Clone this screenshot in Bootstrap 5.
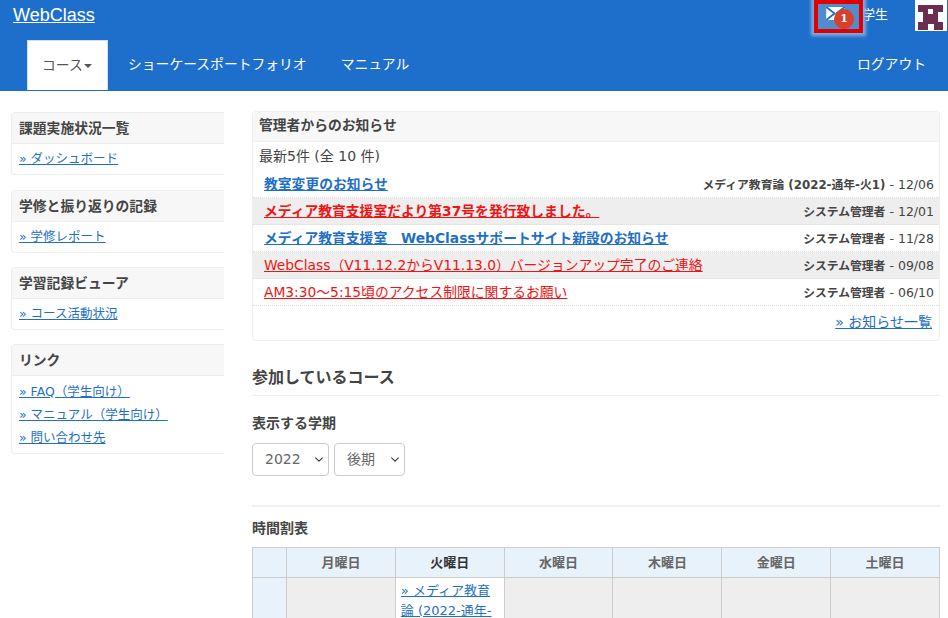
<!DOCTYPE html>
<html lang="ja">
<head>
<meta charset="utf-8">
<title>WebClass</title>
<link href="https://cdn.jsdelivr.net/npm/bootstrap@5.3.0/dist/css/bootstrap.min.css" rel="stylesheet">
<style>
html,body{height:618px;overflow:hidden}
body{font-family:"DejaVu Sans","Noto Sans CJK JP",sans-serif;font-size:14px;color:#444;background:#fff}
a{color:#1f6fc6}
.wc-top{background:#1e6fcb;height:91px;color:#fff}
.wc-row1{height:33px;padding-left:13px}
.wc-brand{color:#fff;font-size:18px;line-height:30px;font-family:"Liberation Sans",sans-serif}
.wc-mail{width:49px;height:33px;border:4px solid #e00000;box-shadow:0 0 3px 3px #7fabe0;background:#4f8cd2;position:relative}
.wc-badge{position:absolute;left:16px;top:5px;width:20px;height:20px;border-radius:50%;background:#d9402c;color:#fff;font:bold 11px/20px "DejaVu Serif",serif;text-align:center}
.wc-env{position:absolute;left:8px;top:3px}
.wc-role{color:#fff;font-size:13px;width:53px;margin-bottom:3px;margin-left:-1px}
.wc-logo{width:32px;height:31px;background:#fff;margin-right:1px;display:block;margin-bottom:2px}
.wc-row2{height:58px;padding-left:27px;padding-right:22px}
.wc-tab{display:block;color:#fff;text-decoration:none;font-size:13.8px;line-height:48px;padding:0;height:50px;margin-top:7px}
.wc-tab-on{background:#fff;color:#555;border:1px solid #cfe0f3;border-bottom:0;padding-left:14px;width:81px;margin-right:20px}
.wc-tab-mid{margin-right:34px}
.wc-caret{display:inline-block;border:4px solid transparent;border-top-color:#555;border-bottom:0;vertical-align:middle;margin-left:1px}
.wc-side{width:213px;margin-left:11px;margin-top:21px;flex:none}
.wc-main{width:688px;margin-left:28px;margin-top:20px;flex:none}
.wc-box{border:1px solid #eee;border-right:0;border-radius:4px 0 0 4px;margin-bottom:14px;background:#fff;height:63px}
.wc-box:first-child{margin-bottom:15px}
.wc-box-tall{height:110px}
.wc-box-head{background:#f7f7f7;border-bottom:1px solid #eee;font-weight:700;font-size:13.8px;height:31px;line-height:30px;padding-left:7px}
.wc-box-body{padding:3px 7px 0;font-size:12.5px;line-height:23px}
.wc-box-tall .wc-box-body{padding-top:4px}
.wc-box-body a{display:block;height:23px}
.wc-notice{border:1px solid #eee;border-radius:4px;height:230px}
.wc-notice-head{height:30px;background:#f7f7f7;border-bottom:1px solid #eee;font-weight:700;font-size:13.8px;line-height:27px;padding-left:6px;border-radius:4px 4px 0 0}
.wc-count{font-size:14px;line-height:29px;padding:0 6px;height:29px}
.wc-news{height:27px;padding:0 5px 0 11px;border-bottom:1px dotted #ddd;font-size:13.8px;line-height:26px}
.wc-news b{font-weight:700}
.wc-news-alt{background:#eee}
.wc-red{color:#f01414}
.wc-src{font-size:11.8px;font-weight:700;line-height:26px;padding-top:1px;color:#444}
.wc-src span{font-weight:400;font-size:12.5px}
.wc-more{font-size:14px;text-align:right;padding:6px 7px 0 0;line-height:20px}
.wc-h1{font-size:16px;font-weight:700;line-height:24px;margin:25px 0 0;padding-bottom:5px;border-bottom:1px solid #eee;color:#444}
.wc-h2{font-size:14px;font-weight:700;line-height:20px;margin:0;color:#444}
.wc-term{margin:17px 0 10px}
.wc-selrow{gap:5px}
.wc-sel{height:33px;font-size:14px;padding:0 20px 0 12px;color:#666;border-radius:4px;background-position:right 3px center;background-size:12px 9px;font-family:inherit;border:1px solid #ccc}
.wc-sel1{width:77px}.wc-sel2{width:71px}
.wc-rule{height:2px;background:#f2f2f2;margin:29px 0 11px}
.wc-tt{margin-bottom:9px}
.wc-table{width:100%;table-layout:fixed;border-collapse:collapse;font-size:13px}
.wc-table th,.wc-table td{border:1px solid #ccc;padding:0}
.wc-col{width:34px}
.wc-table th{background:#e7f2fb;height:30px;text-align:center;color:#666;font-weight:700}
.wc-table td{background:#eee;height:70px;vertical-align:top}
.wc-table td.wc-first{background:#e7f2fb}
.wc-table td.wc-active{background:#fff;padding:3px 5px;line-height:20px}
.wc-table th.wc-now{color:#333}
</style>
</head>
<body>
<header class="wc-top">
  <div class="wc-row1 d-flex align-items-start">
    <a class="wc-brand me-auto" href="#">WebClass</a>
    <div class="wc-mail">
      <svg class="wc-env" width="19" height="13" viewBox="0 0 20 14"><rect width="20" height="14" fill="#fff"/><path d="M0 0l9 7-9 7M20 0l-9 7" fill="none" stroke="#1e6fcb" stroke-width="2"/></svg>
      <span class="wc-badge">1</span>
    </div>
    <div class="wc-role d-flex align-items-center align-self-stretch">学生</div>
    <svg class="wc-logo" viewBox="0 0 32 31"><path fill="#6d2c52" fill-rule="evenodd" d="M3 5h25v7h-5v10h5v8H19v-6h-6v6H3v-8h5V12H3zM13 9v5h5V9z"/></svg>
  </div>
  <nav class="wc-row2 d-flex align-items-start">
    <a class="wc-tab wc-tab-on" href="#">コース<span class="wc-caret"></span></a>
    <a class="wc-tab wc-tab-mid" href="#">ショーケースポートフォリオ</a>
    <a class="wc-tab" href="#">マニュアル</a>
    <a class="wc-tab ms-auto" href="#">ログアウト</a>
  </nav>
</header>
<div class="d-flex">
  <aside class="wc-side">
    <section class="wc-box">
      <div class="wc-box-head">課題実施状況一覧</div>
      <div class="wc-box-body"><a href="#">» ダッシュボード</a></div>
    </section>
    <section class="wc-box">
      <div class="wc-box-head">学修と振り返りの記録</div>
      <div class="wc-box-body"><a href="#">» 学修レポート</a></div>
    </section>
    <section class="wc-box">
      <div class="wc-box-head">学習記録ビューア</div>
      <div class="wc-box-body"><a href="#">» コース活動状況</a></div>
    </section>
    <section class="wc-box wc-box-tall">
      <div class="wc-box-head">リンク</div>
      <div class="wc-box-body"><a href="#">» FAQ（学生向け）</a><a href="#">» マニュアル（学生向け）</a><a href="#">» 問い合わせ先</a></div>
    </section>
  </aside>
  <main class="wc-main">
    <section class="wc-notice">
      <div class="wc-notice-head">管理者からのお知らせ</div>
      <div class="wc-count">最新5件 (全 10 件)</div>
      <div class="wc-news d-flex justify-content-between"><a href="#"><b>教室変更のお知らせ</b></a><div class="wc-src">メディア教育論 (2022-通年-火1) <span>- 12/06</span></div></div>
      <div class="wc-news wc-news-alt d-flex justify-content-between"><a class="wc-red" href="#"><b>メディア教育支援室だより第37号を発行致しました。</b></a><div class="wc-src">システム管理者 <span>- 12/01</span></div></div>
      <div class="wc-news d-flex justify-content-between"><a href="#"><b>メディア教育支援室　WebClassサポートサイト新設のお知らせ</b></a><div class="wc-src">システム管理者 <span>- 11/28</span></div></div>
      <div class="wc-news wc-news-alt d-flex justify-content-between"><a class="wc-red" href="#">WebClass（V11.12.2からV11.13.0）バージョンアップ完了のご連絡</a><div class="wc-src">システム管理者 <span>- 09/08</span></div></div>
      <div class="wc-news d-flex justify-content-between"><a class="wc-red" href="#">AM3:30～5:15頃のアクセス制限に関するお願い</a><div class="wc-src">システム管理者 <span>- 06/10</span></div></div>
      <div class="wc-more"><a href="#">» お知らせ一覧</a></div>
    </section>
    <h2 class="wc-h1">参加しているコース</h2>
    <h3 class="wc-h2 wc-term">表示する学期</h3>
    <div class="d-flex wc-selrow">
      <select class="form-select wc-sel wc-sel1"><option>2022</option></select>
      <select class="form-select wc-sel wc-sel2"><option>後期</option></select>
    </div>
    <div class="wc-rule"></div>
    <h3 class="wc-h2 wc-tt">時間割表</h3>
    <table class="wc-table">
      <colgroup><col class="wc-col"><col><col><col><col><col><col></colgroup>
      <tr><th></th><th>月曜日</th><th class="wc-now">火曜日</th><th>水曜日</th><th>木曜日</th><th>金曜日</th><th>土曜日</th></tr>
      <tr><td class="wc-first"></td><td></td><td class="wc-active"><a href="#">» メディア教育論 (2022-通年-火1)</a></td><td></td><td></td><td></td><td></td></tr>
    </table>
  </main>
</div>
<script src="https://cdn.jsdelivr.net/npm/bootstrap@5.3.0/dist/js/bootstrap.bundle.min.js"></script>
</body>
</html>
